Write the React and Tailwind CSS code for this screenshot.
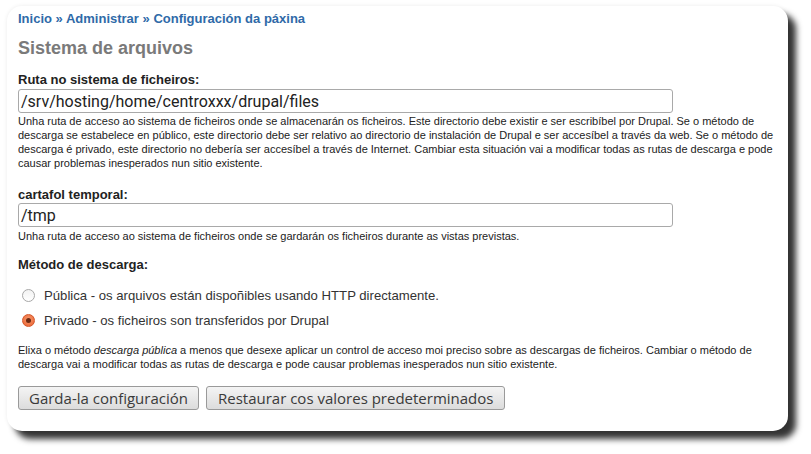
import React from 'react'

const sans = { fontFamily: '"Liberation Sans", Arial, sans-serif' }
const inputFont = { fontFamily: 'Roboto, "Open Sans", sans-serif' }
const buttonFont = { fontFamily: '"Open Sans", "DejaVu Sans", sans-serif' }

function Radio({ checked }) {
  if (checked) {
    return (
      <span className="flex h-[13px] w-[13px] items-center justify-center rounded-full border border-[#d4562a] bg-[radial-gradient(circle_at_50%_40%,#f79a70,#ea5f2c)]">
        <span className="h-[5px] w-[5px] rounded-full bg-[#6b2a12]" />
      </span>
    )
  }
  return (
    <span className="h-[13px] w-[13px] rounded-full border border-[#a8a8a8] bg-[linear-gradient(#f2f2f2,#ffffff)]" />
  )
}

export default function App() {
  return (
    <div className="min-h-[454px] w-[811px] bg-white pl-[7px] pt-[6px]" style={sans}>
      <div className="h-[425px] w-[781px] rounded-[15px] bg-white pl-[11px] pr-[8px] pt-[5px] shadow-[8px_8px_6px_rgba(0,0,0,0.8),0_0_4px_rgba(0,0,0,0.08)]">
        {/* Breadcrumb */}
        <div className="text-[13px] font-bold leading-[15px] text-[#2f6aa8]">
          <a>Inicio</a> » <a>Administrar</a> » <a>Configuración da páxina</a>
        </div>

        <h2 className="mt-[12px] text-[18px] font-bold leading-[20px] text-[#7a7a7a]">Sistema de arquivos</h2>

        {/* Ruta */}
        <div className="mt-[14px]">
          <label className="block text-[13px] font-bold leading-[15px] text-[#222]">Ruta no sistema de ficheiros:</label>
          <div className="mt-[2px] flex h-[24px] w-[655px] items-center rounded-[3px] border border-[#a9a9a9] bg-white px-[2px] pt-[1px] text-[16px] text-[#222]" style={inputFont}>
            /srv/hosting/home/centroxxx/drupal/files
          </div>
          <p className="mt-[1px] text-[11px] leading-[14px] text-[#222]">
            Unha ruta de acceso ao sistema de ficheiros onde se almacenarán os ficheiros. Este directorio debe existir e ser escribíbel por Drupal. Se o método de descarga se estabelece en público, este directorio debe ser relativo ao directorio de instalación de Drupal e ser accesíbel a través da web. Se o método de descarga é privado, este directorio no debería ser accesíbel a través de Internet. Cambiar esta situación vai a modificar todas as rutas de descarga e pode causar problemas inesperados nun sitio existente.
          </p>
        </div>

        {/* Temporal */}
        <div className="mt-[17px]">
          <label className="block text-[13px] font-bold leading-[15px] text-[#222]">cartafol temporal:</label>
          <div className="mt-[1px] flex h-[24px] w-[655px] items-center rounded-[3px] border border-[#a9a9a9] bg-white px-[2px] pt-[1px] text-[16px] text-[#222]" style={inputFont}>
            /tmp
          </div>
          <p className="mt-[2px] text-[11px] leading-[14px] text-[#222]">
            Unha ruta de acceso ao sistema de ficheiros onde se gardarán os ficheiros durante as vistas previstas.
          </p>
        </div>

        {/* Método */}
        <div className="mt-[14px]">
          <div className="text-[13px] font-bold leading-[15px] text-[#222]">Método de descarga:</div>
          <div className="mt-[16px] flex flex-col gap-[10px] pl-[4px] text-[13.15px] leading-[15px] text-[#333]">
            <label className="flex items-center gap-[9px]">
              <Radio />
              <span>Pública - os arquivos están dispoñibles usando HTTP directamente.</span>
            </label>
            <label className="flex items-center gap-[9px]">
              <Radio checked />
              <span>Privado - os ficheiros son transferidos por Drupal</span>
            </label>
          </div>
          <p className="mt-[15px] text-[11px] leading-[14px] text-[#222]">
            Elixa o método <em>descarga pública</em> a menos que desexe aplicar un control de acceso moi preciso sobre as descargas de ficheiros. Cambiar o método de descarga vai a modificar todas as rutas de descarga e pode causar problemas inesperados nun sitio existente.
          </p>
        </div>

        {/* Buttons */}
        <div className="mt-[15px] flex gap-[7px]" style={buttonFont}>
          <button className="h-[24px] rounded-[3px] border border-[#9a9a9a] bg-[linear-gradient(#f4f4f4,#dcdcdc)] px-[10px] text-[15px] leading-[20px] text-[#3a3a3a]">
            Garda-la configuración
          </button>
          <button className="h-[24px] rounded-[3px] border border-[#9a9a9a] bg-[linear-gradient(#f4f4f4,#dcdcdc)] px-[11px] text-[15px] leading-[20px] text-[#3a3a3a]">
            Restaurar cos valores predeterminados
          </button>
        </div>
      </div>
    </div>
  )
}
